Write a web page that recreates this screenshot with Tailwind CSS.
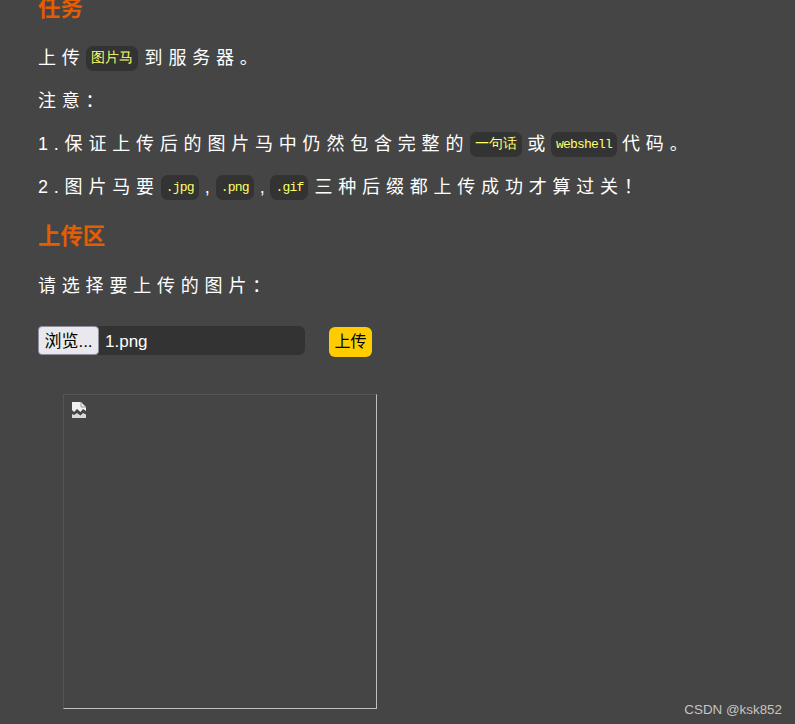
<!doctype html>
<html>

<head>
    <title>Upload</title>
    <meta charset="UTF-8">
    <meta name="viewport" content="width=device-width, initial-scale=1.0">
    <script src="https://cdn.jsdelivr.net/npm/@tailwindcss/browser@4"></script>
</head>

<body class="bg-[#454545] overflow-hidden h-screen relative font-['Liberation_Sans','Noto_Sans_CJK_SC',sans-serif]">
    <div class="pl-[38px] -mt-[6px]">
        <h2 class="text-[22.4px] leading-[30px] font-bold text-[#e65c00] mb-[22px]">任务</h2>

        <p class="text-[18px] leading-[24px] tracking-[5.8px] text-white mb-[19px] h-[24px] flex items-center whitespace-pre">上传<code class="bg-[#333333] rounded-[7px] text-[#ffff66] text-[14px] tracking-normal px-[5px] py-[3px] leading-[19px] mr-[7px]">图片马</code>到服务器。</p>
        <p class="text-[18px] leading-[24px] tracking-[5.8px] text-white mb-[19px] h-[24px]">注意：</p>
        <p class="text-[18px] leading-[24px] tracking-[5.8px] text-white mb-[19px] h-[24px] flex items-center whitespace-pre">1.保证上传后的图片马中仍然包含完整的<code class="ml-[1px] bg-[#333333] rounded-[7px] text-[#ffff66] text-[14px] tracking-normal px-[5px] py-[3px] leading-[19px] mr-[5px]">一句话</code>或<code class="bg-[#333333] rounded-[7px] text-[#ffff66] text-[13px] tracking-[-0.8px] px-[5px] py-[3px] leading-[19px] mr-[5px] font-['Liberation_Mono',monospace]">webshell</code>代码。</p>
        <p class="text-[18px] leading-[24px] tracking-[5.8px] text-white mb-[23px] h-[24px] flex items-center whitespace-pre">2.图片马要<code class="ml-[1px] bg-[#333333] rounded-[7px] text-[#ffff66] text-[13px] tracking-[-0.8px] px-[5px] py-[3px] leading-[19px] mr-[6px] font-['Liberation_Mono',monospace]">.jpg</code>,<code class="bg-[#333333] rounded-[7px] text-[#ffff66] text-[13px] tracking-[-0.8px] px-[5px] py-[3px] leading-[19px] mr-[6px] font-['Liberation_Mono',monospace]">.png</code>,<code class="bg-[#333333] rounded-[7px] text-[#ffff66] text-[13px] tracking-[-0.8px] px-[5px] py-[3px] leading-[19px] mr-[6px] font-['Liberation_Mono',monospace]">.gif</code>三种后缀都上传成功才算过关！</p>

        <h2 class="text-[22.4px] leading-[30px] font-bold text-[#e65c00] mb-[22px]">上传区</h2>
        <p class="text-[18px] leading-[24px] tracking-[5.8px] text-white mb-[28px] h-[24px]">请选择要上传的图片：</p>

        <div class="flex items-start h-[31px] mb-[37px]">
            <div class="w-[267px] h-[29px] bg-[#333333] rounded-md flex items-center text-white text-[17px]">
                <button class="w-[61px] h-[29px] pt-[2px] bg-[#e9e9ed] border border-[#8f8f9d] rounded-[4px] text-black text-[17px]">浏览...</button>
                <span class="ml-[6px] pt-[3px]">1.png</span>
            </div>
            <button class="ml-[24px] mt-[1px] w-[43px] h-[30px] bg-[#ffcc00] rounded-md text-black text-[16px]">上传</button>
        </div>

        <div class="ml-[25px] w-[314px] h-[315px] border border-t-[#555555] border-l-[#555555] border-r-[#c0c0c0] border-b-[#c0c0c0] pt-[7px] pl-[7px]">
            <svg class="block" width="16" height="16" viewBox="0 0 16 16">
                <path d="M1 0H10L15 5V9L12 7L9.500 10L6 7L3 10L1 8Z" fill="#f0f0f0"/>
                <path d="M10 0V5H15" fill="none" stroke="#999999"/>
                <path d="M1 12L3 13L6 11L9.500 13.500L12 11L15 12.500V16H1Z" fill="#d8d8d8"/>
            </svg>
        </div>
    </div>
    <div class="absolute right-[13px] bottom-[5px] text-[13.400px] leading-[18px] text-[#c4c4c4]">CSDN @ksk852</div>
</body>

</html>
